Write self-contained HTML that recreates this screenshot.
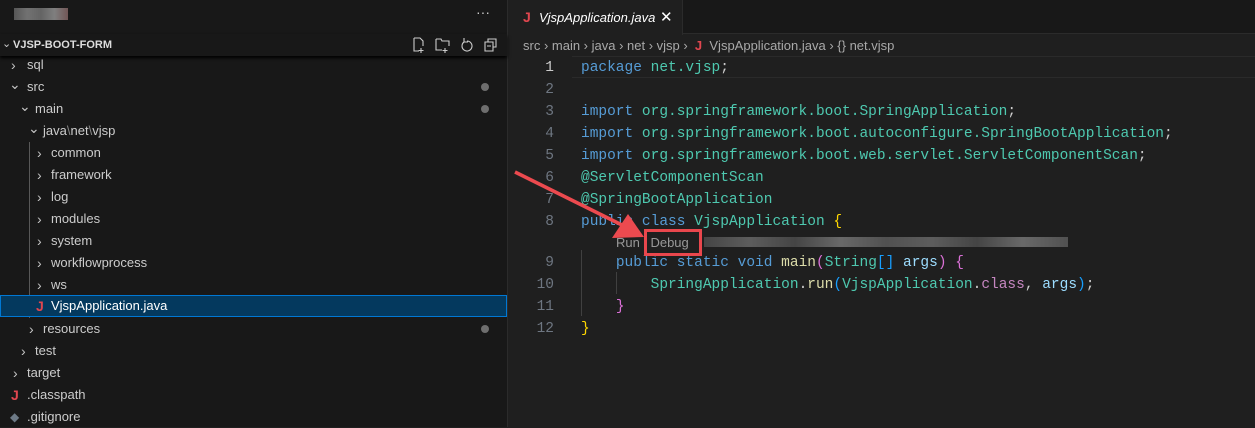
<!DOCTYPE html>
<html><head><meta charset="utf-8"><style>
*{margin:0;padding:0;box-sizing:border-box}
body{width:1255px;height:427px;background:#1f1f1f;overflow:hidden;position:relative;font-family:"Liberation Sans",sans-serif;color:#ccc}
#side{position:absolute;left:0;top:0;width:508px;height:427px;background:#181818;border-right:1px solid #2b2b2b}
.row{position:absolute;left:0;width:507px;height:22px;font-size:13px;line-height:22px;color:#ccc}
.chev{position:absolute;top:0;font-size:14px;color:#c5c5c5}
.dot{position:absolute;left:481px;top:7px;width:8px;height:8px;border-radius:50%;background:#6e6e6e}
.J{position:absolute;color:#e0464f;font-weight:bold;font-size:14px}
#tabbar{position:absolute;left:509px;top:0;right:0;height:34px;background:#181818;border-bottom:1px solid #2b2b2b}
#tab{position:absolute;left:509px;top:0;width:174px;height:35px;background:#1f1f1f;border-right:1px solid #2b2b2b;font-size:13px;line-height:35px;font-style:italic;color:#fff}
#bc{position:absolute;left:523px;top:36px;font-size:13px;color:#a9a9a9;line-height:20px}
.code{position:absolute;left:0;font-family:"Liberation Mono",monospace;font-size:14.5px;line-height:22px;white-space:pre}
.ln{position:absolute;width:554px;text-align:right;color:#6e7681;font-family:"Liberation Mono",monospace;font-size:14.5px;line-height:22px}
.k{color:#569cd6}.t{color:#4ec9b0}.w{color:#ccc}.y{color:#ffd700}.p{color:#da70d6}.f{color:#dcdcaa}.v{color:#9cdcfe}.b{color:#179fff}.c{color:#c586c0}
</style></head><body>
<div id="side">
 <div style="position:absolute;left:14px;top:8px;width:54px;height:12px;background:linear-gradient(90deg,#666,#888,#777,#999,#866);opacity:.8"></div>
 <div style="position:absolute;left:476px;top:4px;font-size:14px;color:#ccc">···</div>
 <div style="position:absolute;left:0;top:34px;width:507px;height:22px;box-shadow:0 2px 3px #000;background:#181818">
  <span style="position:absolute;left:2px;top:3px;font-size:11px">&#8964;</span>
  <span style="position:absolute;left:13px;top:5px;font-size:11px;font-weight:bold;color:#ddd">VJSP-BOOT-FORM</span>
  <svg style="position:absolute;left:412px;top:3px" width="90" height="16" fill="none" stroke="#ccc" stroke-width="1.1">
   <path d="M2 1h6l3 3v5M2 1v13h5M9 11v5M6.5 13.5h5"/>
   <path d="M24 2h5l1 2h7v5M24 2v11h6M33 11v5M30.5 13.5h5"/>
   <path d="M55 4a5 5 0 1 1-3 1M52 1v4h4"/>
   <path d="M73 5h8v9h-8zM76 5V2h8v8h-3M75 9h4"/>
  </svg>
 </div>
 <div class="row" style="top:54px"><span class="chev" style="left:11px">›</span><span style="position:absolute;left:27px">sql</span></div>
 <div class="row" style="top:76px"><span class="chev" style="left:9px;top:-3px">⌄</span><span style="position:absolute;left:27px">src</span><div class="dot"></div></div>
 <div class="row" style="top:98px"><span class="chev" style="left:19px;top:-3px">⌄</span><span style="position:absolute;left:35px">main</span><div class="dot"></div></div>
 <div class="row" style="top:120px"><span class="chev" style="left:28px;top:-3px">⌄</span><span style="position:absolute;left:43px">java<span style="color:#888">\</span>net<span style="color:#888">\</span>vjsp</span></div>
 <div style="position:absolute;left:29px;top:142px;width:1px;height:176px;background:#585858"></div>
 <div class="row" style="top:142px"><span class="chev" style="left:37px">›</span><span style="position:absolute;left:51px">common</span></div>
 <div class="row" style="top:164px"><span class="chev" style="left:37px">›</span><span style="position:absolute;left:51px">framework</span></div>
 <div class="row" style="top:186px"><span class="chev" style="left:37px">›</span><span style="position:absolute;left:51px">log</span></div>
 <div class="row" style="top:208px"><span class="chev" style="left:37px">›</span><span style="position:absolute;left:51px">modules</span></div>
 <div class="row" style="top:230px"><span class="chev" style="left:37px">›</span><span style="position:absolute;left:51px">system</span></div>
 <div class="row" style="top:252px"><span class="chev" style="left:37px">›</span><span style="position:absolute;left:51px">workflowprocess</span></div>
 <div class="row" style="top:274px"><span class="chev" style="left:37px">›</span><span style="position:absolute;left:51px">ws</span></div>
 <div class="row" style="top:295px;background:#04395e;border:1px solid #0078d4"><span class="J" style="left:35px;top:-1px">J</span><span style="position:absolute;left:50px;top:-1px;color:#fff">VjspApplication.java</span></div>
 <div class="row" style="top:318px"><span class="chev" style="left:29px">›</span><span style="position:absolute;left:43px">resources</span><div class="dot"></div></div>
 <div class="row" style="top:340px"><span class="chev" style="left:21px">›</span><span style="position:absolute;left:35px">test</span></div>
 <div class="row" style="top:362px"><span class="chev" style="left:13px">›</span><span style="position:absolute;left:27px">target</span></div>
 <div class="row" style="top:384px"><span class="J" style="left:11px">J</span><span style="position:absolute;left:27px">.classpath</span></div>
 <div class="row" style="top:406px"><span style="position:absolute;left:10px;top:0;color:#6d7a86;font-size:12px">◆</span><span style="position:absolute;left:27px">.gitignore</span></div>
</div>
<div id="tabbar"></div>
<div id="tab"><span class="J" style="left:14px;font-style:normal;line-height:35px">J</span><span style="position:absolute;left:30px">VjspApplication.java</span><span style="position:absolute;left:151px;font-style:normal;font-size:15px">✕</span></div>
<div id="bc">src › main › java › net › vjsp › &nbsp;<span style="color:#e0464f;font-weight:bold">J</span>&nbsp; VjspApplication.java › {} net.vjsp</div>
<div style="position:absolute;left:572px;top:56px;right:0;height:22px;border-top:1px solid #2a2a2a;border-bottom:1px solid #2a2a2a"></div>
<div class="ln" style="top:57px;color:#ccc">1</div>
<div class="ln" style="top:79px">2</div><div class="ln" style="top:101px">3</div><div class="ln" style="top:123px">4</div><div class="ln" style="top:145px">5</div><div class="ln" style="top:167px">6</div><div class="ln" style="top:189px">7</div><div class="ln" style="top:211px">8</div><div class="ln" style="top:252px">9</div><div class="ln" style="top:274px">10</div><div class="ln" style="top:296px">11</div><div class="ln" style="top:318px">12</div>
<div style="position:absolute;left:581px;top:250px;width:1px;height:66px;background:#404040"></div>
<div style="position:absolute;left:616px;top:272px;width:1px;height:22px;background:#404040"></div>
<div class="code" style="left:581px;top:57px"><span class="k">package</span> <span class="t">net.vjsp</span><span class="w">;</span>

<span class="k">import</span> <span class="t">org.springframework.boot.SpringApplication</span><span class="w">;</span>
<span class="k">import</span> <span class="t">org.springframework.boot.autoconfigure.SpringBootApplication</span><span class="w">;</span>
<span class="k">import</span> <span class="t">org.springframework.boot.web.servlet.ServletComponentScan</span><span class="w">;</span>
<span class="t">@ServletComponentScan</span>
<span class="t">@SpringBootApplication</span>
<span class="k">public</span> <span class="k">class</span> <span class="t">VjspApplication</span> <span class="y">{</span></div>
<div style="position:absolute;left:616px;top:231px;font-size:13px;line-height:24px;color:#999">Run | Debug</div>
<div style="position:absolute;left:704px;top:237px;width:364px;height:10px;background:linear-gradient(90deg,#555,#777,#555,#888,#666,#777,#555,#888,#666);opacity:.7"></div>
<div class="code" style="left:581px;top:252px">    <span class="k">public</span> <span class="k">static</span> <span class="k">void</span> <span class="f">main</span><span class="p">(</span><span class="t">String</span><span class="b">[]</span> <span class="v">args</span><span class="p">)</span> <span class="p">{</span>
        <span class="t">SpringApplication</span><span class="w">.</span><span class="f">run</span><span class="b">(</span><span class="t">VjspApplication</span><span class="w">.</span><span class="c">class</span><span class="w">,</span> <span class="v">args</span><span class="b">)</span><span class="w">;</span>
    <span class="p">}</span>
<span class="y">}</span></div>
<div style="position:absolute;left:644px;top:229px;width:58px;height:27px;border:3px solid #e9474d"></div>
<svg style="position:absolute;left:0;top:0" width="1255" height="427"><path d="M515 172L626 227" stroke="#ec4a4f" stroke-width="3.5"/><path d="M644 237L612 238L628 214Z" fill="#ec4a4f"/></svg>
</body></html>
